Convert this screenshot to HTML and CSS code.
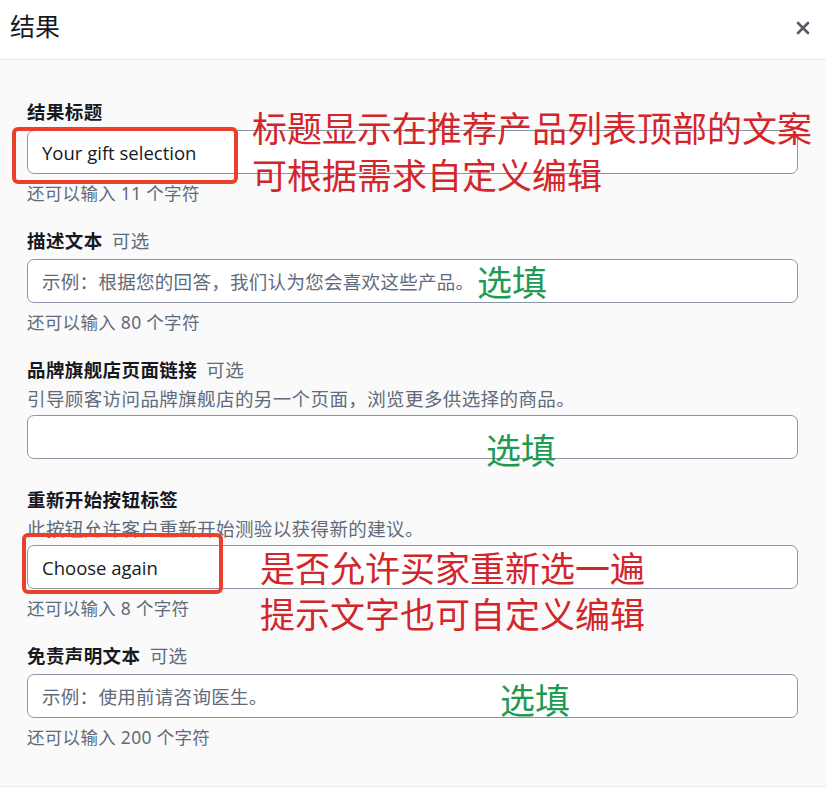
FILE: index.html
```html
<!DOCTYPE html>
<html lang="zh-CN">
<head>
  <meta charset="UTF-8" />
  <meta name="viewport" content="width=device-width, initial-scale=1.0" />
  <title>结果</title>
  <link rel="stylesheet" href="styles.css">
</head>
<body>
  <div class="modal">
    <header class="modal-header">
      <h1>结果</h1>
      <button class="close" aria-label="关闭">
        <svg width="14" height="14" viewBox="0 0 14 14"><path d="M2 2 L12 12 M12 2 L2 12" stroke="#545b64" stroke-width="2.6" stroke-linecap="round"/></svg>
      </button>
    </header>

    <section class="modal-body">
      <div class="field">
        <label class="label">结果标题</label>
        <input class="input" type="text" value="Your gift selection">
        <div class="hint">还可以输入 11 个字符</div>
      </div>

      <div class="field">
        <label class="label">描述文本 <span class="optional">可选</span></label>
        <input class="input" type="text" placeholder="示例：根据您的回答，我们认为您会喜欢这些产品。">
        <div class="hint">还可以输入 80 个字符</div>
      </div>

      <div class="field field-nohint">
        <label class="label">品牌旗舰店页面链接 <span class="optional">可选</span></label>
        <div class="desc">引导顾客访问品牌旗舰店的另一个页面，浏览更多供选择的商品。</div>
        <input class="input" type="text">
      </div>

      <div class="field">
        <label class="label">重新开始按钮标签</label>
        <div class="desc">此按钮允许客户重新开始测验以获得新的建议。</div>
        <input class="input" type="text" value="Choose again">
        <div class="hint">还可以输入 8 个字符</div>
      </div>

      <div class="field">
        <label class="label">免责声明文本 <span class="optional">可选</span></label>
        <input class="input" type="text" placeholder="示例：使用前请咨询医生。">
        <div class="hint">还可以输入 200 个字符</div>
      </div>
    </section>

    <footer class="modal-footer"></footer>

    <!-- annotations drawn over the form -->
    <div class="mark mark-title"></div>
    <div class="note note-red note-title">标题显示在推荐产品列表顶部的文案<br>可根据需求自定义编辑</div>
    <div class="note note-green note-desc">选填</div>
    <div class="note note-green note-link">选填</div>
    <div class="mark mark-again"></div>
    <div class="note note-red note-again">是否允许买家重新选一遍<br>提示文字也可自定义编辑</div>
    <div class="note note-green note-disclaimer">选填</div>
  </div>
</body>
</html>
```

FILE: styles.css
```css
body {
  margin: 0;
  font-family: "Noto Sans", "Noto Sans CJK SC", sans-serif;
  color: #16191f;
  background: #ffffff;
}
.modal {
  position: relative;
  width: 826px;
  height: 799px;
  overflow: hidden;
}
.modal-header {
  height: 59px;
  display: flex;
  align-items: center;
  justify-content: space-between;
  padding: 0 16px 0 10px;
  border-bottom: 1px solid #e9ebed;
  background: #ffffff;
}
.modal-header h1 {
  margin: 0;
  font-size: 25px;
  font-weight: normal;
  line-height: 30px;
  margin-top: -8px;
}
.close {
  border: 0;
  background: none;
  padding: 0;
  display: flex;
  margin-top: -4px;
}
.modal-body {
  background: #fafafa;
  padding: 38px 28px 34px 27px;
  height: 727px;
  box-sizing: border-box;
  border-bottom: 1px solid #e9ebed;
}
/* Form fields */
.field {
  display: flex;
  flex-direction: column;
  margin-bottom: 20px;
}
.field-nohint {
  margin-bottom: 27px;
}
.label {
  font-size: 18.5px;
  font-weight: bold;
  line-height: 28px;
  letter-spacing: 0.4px;
  margin-bottom: 4px;
}
.optional {
  font-weight: normal;
  color: #5f6b7a;
  margin-left: 4px;
}
.desc {
  font-size: 18.5px;
  line-height: 28px;
  letter-spacing: 0.4px;
  color: #5f6b7a;
  margin-top: -3px;
  margin-bottom: 2px;
}
.input {
  height: 44px;
  box-sizing: border-box;
  border: 1px solid #8c95a3;
  border-radius: 7px;
  background: #ffffff;
  padding: 0 14px;
  font-family: "Open Sans", "Noto Sans CJK SC", sans-serif;
  font-size: 18.5px;
  color: #16191f;
  outline: none;
}
.input::placeholder {
  font-family: "Noto Sans CJK SC", sans-serif;
  font-size: 18.5px;
  letter-spacing: 0.3px;
  color: #5f6b7a;
}
.hint {
  font-size: 17.5px;
  line-height: 28px;
  letter-spacing: 0.3px;
  color: #5f6b7a;
  margin-top: 5px;
}
/* Annotations */
.mark {
  position: absolute;
  border: 4px solid #e8402a;
  border-radius: 6px;
  box-sizing: border-box;
}
.mark-title {
  left: 12px;
  top: 127px;
  width: 226px;
  height: 57px;
}
.mark-again {
  left: 22px;
  top: 533px;
  width: 201px;
  height: 61px;
}
.note {
  position: absolute;
  font-family: "Noto Sans CJK SC", sans-serif;
  font-size: 35px;
  white-space: nowrap;
}
.note-red {
  color: #d3262b;
  line-height: 47px;
}
.note-green {
  color: #1e9a52;
  line-height: 40px;
}
.note-title {
  left: 252px;
  top: 103px;
}
.note-again {
  left: 260px;
  top: 544px;
  line-height: 46px;
}
.note-desc {
  left: 477px;
  top: 261px;
}
.note-link {
  left: 486px;
  top: 429px;
}
.note-disclaimer {
  left: 500px;
  top: 679px;
}
```
